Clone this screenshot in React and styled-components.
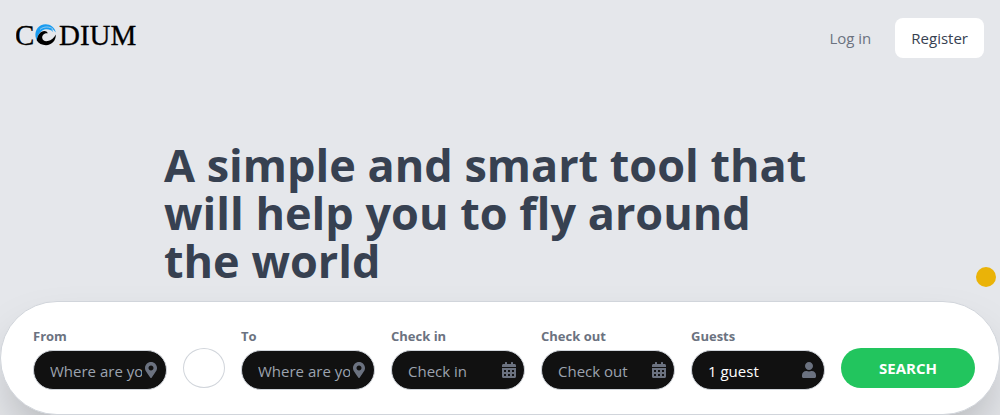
import React from 'react';
import styled, { createGlobalStyle } from 'styled-components';
import { FaMapMarkerAlt, FaCalendarAlt, FaUser } from 'react-icons/fa';

const GlobalStyle = createGlobalStyle`
  *, *::before, *::after { box-sizing: border-box; }
  body {
    margin: 0;
    background: #e5e7eb;
    color: #374151;
    font-family: 'Segoe UI', 'Open Sans', sans-serif;
    font-size: 15px;
    line-height: 24px;
  }
  button, input { font: inherit; }
`;

const Header = styled.header`
  display: flex;
  align-items: center;
  justify-content: space-between;
  padding: 18px 16px;
`;

const LogoLink = styled.a`
  display: block;
  height: 32px;
  margin-bottom: 8px;
`;

const Nav = styled.nav`
  display: flex;
  align-items: center;
  gap: 24px;
`;

const NavLink = styled.a`
  color: #6b7280;
  text-decoration: none;
`;

const RegisterLink = styled(NavLink)`
  padding: 8px 16px;
  border-radius: 8px;
  background: #fff;
  color: #374151;
`;

const Hero = styled.section`
  position: relative;
  padding: 65px 16px 16px;
`;

const Title = styled.h1`
  max-width: 672px;
  margin: 0 auto;
  font-size: 45px;
  line-height: 48px;
  font-weight: 700;
`;

const Dot = styled.span`
  position: absolute;
  right: 4px;
  bottom: 14px;
  width: 20px;
  height: 20px;
  border-radius: 50%;
  background: #eab308;
`;

const SearchForm = styled.form`
  display: flex;
  align-items: flex-end;
  gap: 16px;
  padding: 24px 24px 24px 32px;
  border: 1px solid #d1d5db;
  border-radius: 60px;
  background: #fff;
  box-shadow: 0 25px 50px -12px rgba(0, 0, 0, 0.25);
`;

const Field = styled.div`
  flex: 1;
  min-width: 0;
  display: flex;
  flex-direction: column;
  gap: 4px;
`;

const Label = styled.label`
  color: #6b7280;
  font-size: 13px;
  line-height: 20px;
  font-weight: 700;
`;

const InputShell = styled.div`
  display: flex;
  align-items: center;
  gap: 2px;
  height: 40px;
  padding: 0 8px 0 16px;
  border: 1px solid #d1d5db;
  border-radius: 20px;
  background: #111;
  color: #6b7280;
`;

const Input = styled.input`
  flex: 1;
  min-width: 0;
  padding: 2px 0 0;
  border: 0;
  outline: 0;
  background: transparent;
  color: #fff;
  &::placeholder { color: #9ca3af; opacity: 1; }
`;

const IconSlot = styled.span`
  display: flex;
  justify-content: center;
  width: 14px;
  svg { width: auto; height: 16px; }
`;

const SwapButton = styled.button`
  width: 42px;
  height: 40px;
  margin-bottom: 2px;
  border: 1px solid #d1d5db;
  border-radius: 50%;
  background: #fff;
`;

const SearchButton = styled.button`
  flex: 1;
  height: 40px;
  margin-bottom: 2px;
  padding: 0;
  border: 0;
  border-radius: 20px;
  background: #22c55e;
  color: #fff;
  font-weight: 700;
`;

function Logo() {
  return (
    <svg width="121" height="32" viewBox="0 0 121 32" role="img" aria-label="Codium">
      <g fill="#000" stroke="#000" strokeWidth="0.3" fontFamily="'Liberation Serif', serif" fontSize="29">
        <text x="-1" y="27">C</text>
        <text x="43" y="27">DIUM</text>
      </g>
      <path
        fill="#1a9cf0"
        d="M21 22.5C17.8 17 19.6 9.8 25 7.2C31 4.4 38.6 7.4 39.8 14.6C38.4 12.4 37 11.4 35.4 11C36.4 12 37 13 37.2 14.2C34.4 11 29.6 10.4 26 12.8C22.6 15 21.2 18.6 21 22.5Z"
      />
      <path d="M24 11.4C28 8.2 33.6 8.2 37.2 11.2" fill="none" stroke="#e5e7eb" strokeWidth="0.6" />
      <path
        fill="#000"
        d="M20.8 22.6C21.4 17 24.6 13 28.4 13C30 13 31.2 13.8 31.8 15.2C28.6 14.8 26 17 26.2 19.8C26.4 22.4 29 23.6 31.8 23C35.4 22.4 38.2 20 39.8 16.6C40.2 22.4 35.8 27.2 30 27.2C26 27.2 22.6 25.6 20.8 22.6Z"
      />
    </svg>
  );
}

function SearchField({ id, label, icon: Icon, ...input }) {
  return (
    <Field>
      <Label htmlFor={id}>{label}</Label>
      <InputShell>
        <Input id={id} type="text" {...input} />
        <IconSlot><Icon aria-hidden="true" /></IconSlot>
      </InputShell>
    </Field>
  );
}

export default function App() {
  return (
    <>
      <GlobalStyle />
      <Header>
        <LogoLink href="#"><Logo /></LogoLink>
        <Nav>
          <NavLink href="#login">Log in</NavLink>
          <RegisterLink href="#register">Register</RegisterLink>
        </Nav>
      </Header>
      <main>
        <Hero>
          <Title>A simple and smart tool that will help you to fly around the world</Title>
          <Dot />
        </Hero>
        <SearchForm onSubmit={(e) => e.preventDefault()}>
          <SearchField id="from" label="From" icon={FaMapMarkerAlt} placeholder="Where are you?" />
          <SwapButton type="button" aria-label="Swap" />
          <SearchField id="to" label="To" icon={FaMapMarkerAlt} placeholder="Where are you going?" />
          <SearchField id="check-in" label="Check in" icon={FaCalendarAlt} placeholder="Check in" />
          <SearchField id="check-out" label="Check out" icon={FaCalendarAlt} placeholder="Check out" />
          <SearchField id="guests" label="Guests" icon={FaUser} defaultValue="1 guest" />
          <SearchButton type="submit">SEARCH</SearchButton>
        </SearchForm>
      </main>
    </>
  );
}
